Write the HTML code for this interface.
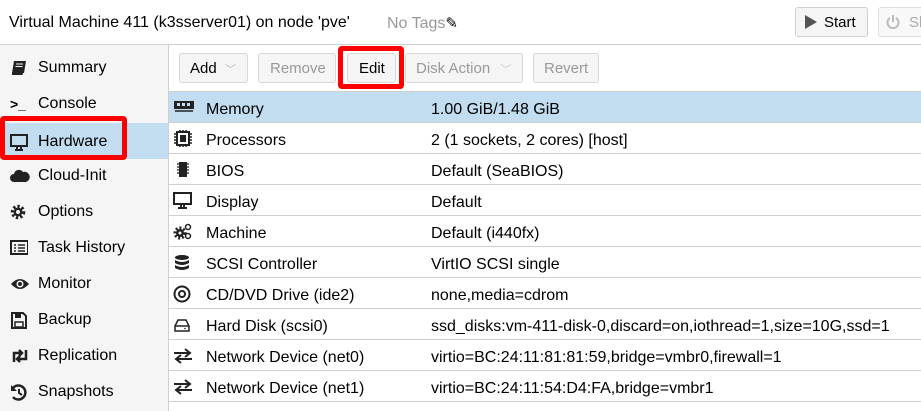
<!DOCTYPE html>
<html><head><style>
*{box-sizing:border-box;margin:0;padding:0}
body{width:921px;height:411px;overflow:hidden;background:#fff;font-family:"Liberation Sans",sans-serif;font-size:15px;color:#000;position:relative}
.abs{position:absolute}
.hdr{left:0;top:0;width:921px;height:45px;border-bottom:1px solid #d0d0d0;background:#fff}
.side{left:0;top:45px;width:169px;height:366px;background:#f5f5f5;border-right:1px solid #d0d0d0}
.si{position:absolute;left:0;width:168px;height:36px;line-height:38px;padding-left:38px;font-size:16px;color:#000}
.si svg{position:absolute;left:10px;top:11px}
.btn{position:absolute;top:53px;height:30px;border:1px solid #d8d8d8;border-radius:3px;background:#f5f5f5;line-height:30px;font-size:15px;color:#999;text-align:left;padding-left:10px}
.row{position:absolute;left:169px;width:752px;height:31px;border-bottom:1px solid #d0d0d0;font-size:16px;line-height:30px}
.row .n{position:absolute;left:37px;top:3px}
.row .v{position:absolute;left:262px;top:3px}
.row svg{position:absolute;left:4px;top:7px}
</style></head><body>
<div class="abs hdr">
 <div class="abs" style="left:9px;top:14px;font-size:16px">Virtual Machine 411 (k3sserver01) on node 'pve'</div>
 <div class="abs" style="left:387px;top:14px;font-size:16px;color:#999">No Tags<span style="color:#000;font-size:15px">✎</span></div>
 <div class="abs" style="left:795px;top:7px;width:73px;height:30px;border:1px solid #d0d0d0;border-radius:3px;background:#f5f5f5;font-size:15px;line-height:29px;padding-left:28px">Start
  <svg class="abs" style="left:8px;top:7px" width="14" height="14"><path d="M1 0L13 7L1 14Z" fill="#555"/></svg></div>
 <div class="abs" style="left:878px;top:7px;width:60px;height:30px;border:1px solid #e0e0e0;border-radius:3px;background:#f8f8f8;font-size:15px;line-height:29px;padding-left:30px;color:#aaa">Sh
  <svg class="abs" style="left:7px;top:7px" width="14" height="14"><path d="M4 3A5.5 5.5 0 1 0 10 3" fill="none" stroke="#bbb" stroke-width="2"/><path d="M7 0V7" stroke="#bbb" stroke-width="2"/></svg></div>
</div>
<div class="abs side">
 <div class="si" style="top:4px"><svg width="18" height="16"><path d="M4 1H16L14 13H2Z" fill="#222"/><path d="M2 13H13L12.5 15H2Z" fill="#222"/><path d="M6 4H13M5.5 6.5H12.5" stroke="#f5f5f5" stroke-width="1"/></svg>Summary</div>
 <div class="si" style="top:40px"><span style="position:absolute;left:10px;font-size:14px;font-weight:bold">&gt;_</span>Console</div>
 <div class="si" style="top:78px;background:#c2dcf0"><svg width="18" height="18"><rect x="1" y="1" width="16" height="11" fill="none" stroke="#222" stroke-width="2"/><path d="M7 12V16H11V12M5 16H13" stroke="#222" stroke-width="2" fill="none"/></svg>Hardware</div>
 <div class="si" style="top:112px"><svg width="20" height="16"><path d="M4 14A4 4 0 0 1 4 6A5 5 0 0 1 13 4A4.5 4.5 0 0 1 16 14Z" fill="#222"/></svg>Cloud-Init</div>
 <div class="si" style="top:148px"><svg width="18" height="18"><circle cx="8" cy="8" r="5.5" fill="none" stroke="#222" stroke-width="3.5" stroke-dasharray="2.2 2"/><circle cx="8" cy="8" r="4.5" fill="#222"/><circle cx="8" cy="8" r="2" fill="#f5f5f5"/></svg>Options</div>
 <div class="si" style="top:184px"><svg width="18" height="16"><rect x="1" y="1" width="17" height="13" fill="none" stroke="#222" stroke-width="2"/><path d="M4 5H6M8 5H15M4 8H6M8 8H15M4 11H6M8 11H15" stroke="#222" stroke-width="1.5"/></svg>Task History</div>
 <div class="si" style="top:220px"><svg width="20" height="16"><path d="M1 8Q10 -2 19 8Q10 18 1 8Z" fill="#222"/><circle cx="10" cy="8" r="3.5" fill="#f5f5f5"/><circle cx="10" cy="8" r="2" fill="#222"/></svg>Monitor</div>
 <div class="si" style="top:256px"><svg width="18" height="18"><path d="M2 1H13L16 4V16H2Z" fill="none" stroke="#222" stroke-width="2"/><rect x="5" y="2" width="6" height="4" fill="#222"/><rect x="5" y="10" width="8" height="5" fill="none" stroke="#222" stroke-width="1.5"/></svg>Backup</div>
 <div class="si" style="top:292px"><svg width="20" height="16"><path d="M4 14V5H12M9 2L12 5L9 8M16 2V11H7M10 8L7 11L10 14" stroke="#222" stroke-width="2.5" fill="none"/></svg>Replication</div>
 <div class="si" style="top:328px"><svg width="18" height="18"><path d="M3 4A7 7 0 1 1 3 13" fill="none" stroke="#222" stroke-width="2.5"/><path d="M1 1V7H7Z" fill="#222"/><path d="M9 5V9L12 11" stroke="#222" stroke-width="2" fill="none"/></svg>Snapshots</div>
</div>
<div class="abs" style="left:0;top:116px;width:127px;height:44px;border:5px solid #f00;border-radius:4px"></div>
<div class="abs" style="left:169px;top:91px;width:752px;height:1px;background:#d0d0d0"></div>
<div class="btn" style="left:179px;width:69px;color:#000">Add <span style="color:#bbb;font-size:11px;margin-left:4px">﹀</span></div>
<div class="btn" style="left:258px;width:78px;padding-left:11px">Remove</div>
<div class="btn" style="left:347px;width:49px;color:#000;padding-left:11px">Edit</div>
<div class="btn" style="left:405px;width:118px">Disk Action <span style="color:#ccc;font-size:11px;margin-left:6px">﹀</span></div>
<div class="btn" style="left:533px;width:66px">Revert</div>
<div class="abs" style="left:338px;top:46px;width:66px;height:43px;border:5px solid #f00;border-radius:4px"></div>

<div class="row" style="top:92px;background:#c2dcf0"><svg width="22" height="14"><rect x="1" y="2" width="20" height="8" fill="#222"/><rect x="4" y="4" width="3" height="3" fill="#c2dcf0"/><rect x="9" y="4" width="3" height="3" fill="#c2dcf0"/><rect x="14" y="4" width="3" height="3" fill="#c2dcf0"/><path d="M2 12H20" stroke="#222" stroke-width="1.5"/></svg><span class="n">Memory</span><span class="v">1.00 GiB/1.48 GiB</span></div>
<div class="row" style="top:123px"><svg width="20" height="18"><rect x="4" y="2" width="12" height="13" fill="none" stroke="#222" stroke-width="2"/><rect x="7" y="5" width="6" height="7" fill="#222"/><path d="M1 4H4M1 7H4M1 10H4M1 13H4M16 4H19M16 7H19M16 10H19M16 13H19M7 0V2M10 0V2M13 0V2M7 15V17M10 15V17M13 15V17" stroke="#222" stroke-width="1.5"/></svg><span class="n">Processors</span><span class="v">2 (1 sockets, 2 cores) [host]</span></div>
<div class="row" style="top:154px"><svg width="20" height="18"><rect x="6" y="1" width="8" height="15" fill="#222"/><path d="M4 3H6M4 6H6M4 9H6M4 12H6M14 3H16M14 6H16M14 9H16M14 12H16" stroke="#222" stroke-width="1.2"/></svg><span class="n">BIOS</span><span class="v">Default (SeaBIOS)</span></div>
<div class="row" style="top:185px"><svg width="20" height="18"><rect x="1" y="1" width="17" height="11" fill="none" stroke="#222" stroke-width="2"/><path d="M8 12V16H11V12M5 16H14" stroke="#222" stroke-width="2" fill="none"/></svg><span class="n">Display</span><span class="v">Default</span></div>
<div class="row" style="top:216px"><svg width="20" height="18"><circle cx="7" cy="10" r="5" fill="none" stroke="#222" stroke-width="3" stroke-dasharray="2 1.8"/><circle cx="7" cy="10" r="4" fill="#222"/><circle cx="7" cy="10" r="1.5" fill="#fff"/><circle cx="15" cy="4" r="2.5" fill="none" stroke="#222" stroke-width="1.5"/><circle cx="15" cy="13" r="2.5" fill="none" stroke="#222" stroke-width="1.5"/></svg><span class="n">Machine</span><span class="v">Default (i440fx)</span></div>
<div class="row" style="top:247px"><svg width="20" height="18"><ellipse cx="9" cy="3.5" rx="7" ry="2.5" fill="#222"/><path d="M2 6Q9 10 16 6V9Q9 13 2 9ZM2 11Q9 15 16 11V14Q9 18 2 14Z" fill="#222"/></svg><span class="n">SCSI Controller</span><span class="v">VirtIO SCSI single</span></div>
<div class="row" style="top:278px"><svg width="20" height="18"><circle cx="9" cy="9" r="7.5" fill="none" stroke="#222" stroke-width="2"/><circle cx="9" cy="9" r="3" fill="none" stroke="#222" stroke-width="2"/></svg><span class="n">CD/DVD Drive (ide2)</span><span class="v">none,media=cdrom</span></div>
<div class="row" style="top:309px"><svg width="20" height="18"><path d="M5 4H13L16 10V15H2V10Z" fill="none" stroke="#222" stroke-width="1.5"/><path d="M2 10H16" stroke="#222" stroke-width="1.5"/><circle cx="12" cy="12.5" r="0.8" fill="#222"/></svg><span class="n">Hard Disk (scsi0)</span><span class="v">ssd_disks:vm-411-disk-0,discard=on,iothread=1,size=10G,ssd=1</span></div>
<div class="row" style="top:340px"><svg width="20" height="18"><path d="M1 6H16M12 2L17 6L12 10M19 12H4M8 8L3 12L8 16" stroke="#222" stroke-width="2" fill="none"/></svg><span class="n">Network Device (net0)</span><span class="v">virtio=BC:24:11:81:81:59,bridge=vmbr0,firewall=1</span></div>
<div class="row" style="top:371px"><svg width="20" height="18"><path d="M1 6H16M12 2L17 6L12 10M19 12H4M8 8L3 12L8 16" stroke="#222" stroke-width="2" fill="none"/></svg><span class="n">Network Device (net1)</span><span class="v">virtio=BC:24:11:54:D4:FA,bridge=vmbr1</span></div>
</body></html>
